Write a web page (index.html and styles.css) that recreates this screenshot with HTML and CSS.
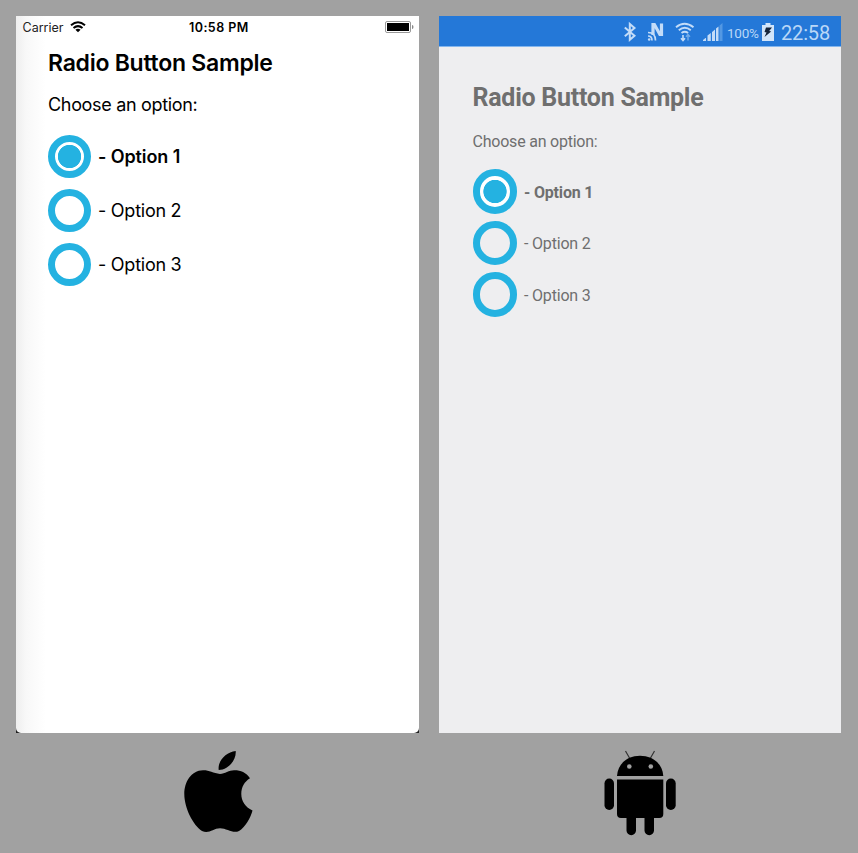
FILE: index.html
```html
<!DOCTYPE html>
<html lang="en">
<head>
<meta charset="utf-8">
<title>Radio Button Sample</title>
<link rel="stylesheet" href="styles.css">
</head>
<body>
<main class="board">
  <div class="device"><section class="screen ios">
    <header class="status">
      <span class="carrier">Carrier</span>
      <svg class="wifi" width="16" height="12" viewBox="0 0 16 12" fill="none" stroke="#000" stroke-width="2"><path d="M1 4.2Q8-1.700 15 4.200M3.500 7Q8 3.300 12.500 7"/><path d="M5.400 8.700Q8 6.700 10.600 8.700L8 11.300Z" fill="#000" stroke="none"/></svg>
      <span class="time">10:58 PM</span>
      <svg class="battery" width="29" height="12" viewBox="0 0 29 12"><rect x=".5" y=".5" width="25" height="11" rx="1.500" fill="#fff" stroke="#999"/><rect x="2" y="2" width="22" height="8" fill="#000"/><path d="M27 4q1.500 0 1.500 2T27 8z" fill="#888"/></svg>
    </header>
    <div class="content">
      <h1>Radio Button Sample</h1>
      <p>Choose an option:</p>
      <ul>
        <li class="on"><i class="radio"></i><span>- Option 1</span></li>
        <li><i class="radio"></i><span>- Option 2</span></li>
        <li><i class="radio"></i><span>- Option 3</span></li>
      </ul>
    </div>
  </section></div>
  <section class="screen android">
    <header class="status">
      <svg class="icons" width="100" height="24" viewBox="0 0 100 24" fill="none" stroke="#c3dcf8" stroke-width="2">
        <path d="M2.800 7.500l9.700 8.300-4.700 4V4l4.700 4-9.700 8.300"/>
        <path d="M31 15V4.500h1.400l5.500 10h1.600V3.500" stroke-width="3.200"/>
        <path d="M26 12.500q7.500 0 7.500 8M26 16q4 0 4 4.500" stroke-width="1.700"/><circle cx="27.200" cy="19.500" r="1.300" fill="#c3dcf8" stroke="none"/>
        <path d="M54 7.200q8.500-7 17.500 0M56.800 10.200q6-4.800 12 0M59.500 13q3.300-2.500 6.600 0" stroke-width="1.900"/>
        <path d="M61 15v5.500M59 18.300l2 2.200 2-2.200" stroke-width="1.600"/><path d="M66 20.500V14.500M64 16.700l2-2.200 2 2.200" stroke="#75ade9" stroke-width="1.400"/>
        <g fill="#c3dcf8" stroke="none"><path d="M81 21v-1l2.500-2h.5v3zM85.500 15.500l3.300-2.500v8h-3.300zM90 12l3-2.500V21h-3zM94 8.500l2.500-2V21H94z"/><path d="M97.500 5.500l3-2.500v18h-3z" fill="#5398e3"/></g>
      </svg>
      <span class="percent">100%</span>
      <svg class="charge" width="12" height="18" viewBox="0 0 12 18"><path d="M3.500 2V0h5v2H12v16H0V2z" fill="#d2e5fa"/><path d="M4 4.500h6L7.200 8l2 .5L2.500 14l2-4.500-2-.6z" fill="#15243a"/></svg>
      <span class="time">22:58</span>
    </header>
    <div class="content">
      <h1>Radio Button Sample</h1>
      <p>Choose an option:</p>
      <ul>
        <li class="on"><i class="radio"></i><span>- Option 1</span></li>
        <li><i class="radio"></i><span>- Option 2</span></li>
        <li><i class="radio"></i><span>- Option 3</span></li>
      </ul>
    </div>
  </section>
  <div class="logo"><svg width="120" height="118" viewBox="0 0 120 118"><path d="M75.700 16C76.500 25 68 35 58.700 35C57.500 26 66 17 75.700 16ZM60 39C53 38 49 35 43 35.200C31 35.500 24.300 47 24.300 59C24.300 73 33 90 42 96C49 99.500 53 93.300 60 93.300C67 93.300 73 99 79 96C85 92.500 91 82 92.500 75.500C85 72 81.300 66 81.300 59C81.300 52 84.500 46.500 90 43.200C86 37 80 35 74 35.200C69 35.300 65 38.500 60 39Z"/></svg></div>
  <div class="logo"><svg width="120" height="118" viewBox="0 0 120 118"><path d="M45.500 16l4 7M74.500 16l-4 7" stroke="#333" stroke-width="1.200"/><path d="M37 41C38 28 48 20.800 60 20.800S82.500 28 83.300 41ZM37 44.500h46.300V79q0 4-4 4H74v12.500a4.500 4.500 0 0 1-9.500 0V83h-8.500v12.500a4.500 4.500 0 0 1-9.500 0V83H41q-4 0-4-4Z"/><rect x="24.500" y="43.500" width="9.500" height="31.500" rx="4.700"/><rect x="86" y="43.500" width="9.700" height="31.500" rx="4.800"/><circle cx="49.300" cy="31.500" r="2.300" fill="#a1a1a1"/><circle cx="70.800" cy="31.500" r="2.300" fill="#a1a1a1"/></svg></div>
</main>
</body>
</html>
```
FILE: styles.css
```css
* { box-sizing: border-box; }
body { margin: 0; background: #a1a1a1; }
.board {
  display: grid;
  grid-template-columns: 403px 402px;
  grid-template-rows: 717px 118px;
  column-gap: 20px;
  row-gap: 2px;
  padding: 16px 0 0 16px;
  height: 853px;
}
h1, p, ul { margin: 0; padding: 0; white-space: nowrap; }
ul { list-style: none; display: flex; flex-direction: column; }
li { display: flex; align-items: center; }
.status { display: flex; align-items: center; }
.radio { flex: none; border-radius: 50%; border: 7px solid #24b2e1; }
.on .radio { background: radial-gradient(circle, #24b2e1 11.300px, #fff 12px); }
.on span { font-weight: 600; }
.device { background: linear-gradient(#fff 90%, #222 91%); }
.ios {
  height: 717px;
  font-family: Inter, sans-serif;
  color: #000;
  background: linear-gradient(90deg, #eee 0, #f8f8f8 10px, #fff 30px);
  border-radius: 0 0 5px 5px;
}
.ios .status { height: 22px; padding: 0 5px 0 6.500px; font-size: 12.500px; }
.carrier { width: 42px; color: #222; }
.wifi { margin-left: 5px; }
.ios .time { margin-left: 103.500px; width: 62px; font-weight: 600; letter-spacing: .45px; white-space: nowrap; }
.battery { margin-left: auto; }
.ios .content { padding: 8px 0 0 32px; }
.ios h1 { font-size: 23px; line-height: 34px; font-weight: 600; letter-spacing: -.26px; }
.ios p { font-size: 18px; line-height: 24px; margin-top: 13px; letter-spacing: -.32px; }
.ios ul { margin-top: 18px; gap: 11px; font-size: 18px; letter-spacing: -.25px; }
.ios li { gap: 7px; }
.ios .on { letter-spacing: -.1px; }
.ios .radio { width: 43px; height: 43px; }
.android { background: #eeeef0; font-family: Roboto, sans-serif; color: #6f6f6f; }
.android .status { height: 31px; background: #2478d8; color: #b9d7f7; border-bottom: 1px solid #83b6ee; padding-left: 183px; }
.icons { flex: none; margin-top: 1px; overflow: visible; }
.percent { font-size: 13.500px; letter-spacing: -.25px; margin: 4px 0 0 5px; width: 35px; }
.charge { margin-top: 2px; }
.android .time { font-size: 20px; letter-spacing: -.15px; margin: 4px 0 0 7px; }
.android .content { padding: 34px 0 0 33.500px; }
.android h1 { font-size: 25px; line-height: 34px; letter-spacing: -.26px; }
.android p { font-size: 16px; line-height: 22px; margin-top: 16px; letter-spacing: -.22px; }
.android ul { margin-top: 16px; gap: 7px; font-size: 16px; letter-spacing: -.18px; }
.android li { gap: 7px; }
.android li span { padding-top: 2px; }
.android .on span { font-weight: 700; }
.android .radio { width: 44.500px; height: 44.500px; }
.logo { display: flex; }
.logo svg { margin-left: 144px; }
.logo:last-child svg { margin-left: 141px; }
```
